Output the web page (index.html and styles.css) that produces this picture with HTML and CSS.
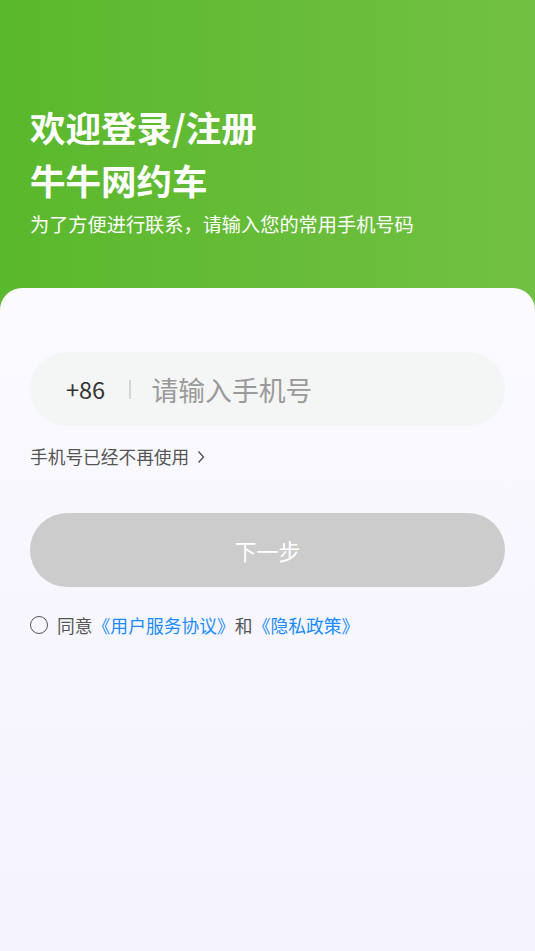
FILE: index.html
```html
<!DOCTYPE html>
<html lang="zh">
<head>
<meta charset="utf-8">
<title>登录</title>
<link rel="stylesheet" href="styles.css">
</head>
<body>
<div class="page">
  <header class="hero">
    <h1 class="title">欢迎登录/注册<br>牛牛网约车</h1>
    <p class="subtitle">为了方便进行联系，请输入您的常用手机号码</p>
  </header>
  <main class="card">
    <div class="phone">
      <span class="code">+86</span>
      <span class="divider"></span>
      <span class="placeholder">请输入手机号</span>
    </div>
    <div class="nouse">手机号已经不再使用
      <svg class="chev" width="8" height="14" viewBox="0 0 8 14"><path d="M1.5 1.5 L6.5 7 L1.5 12.5" fill="none" stroke="#555" stroke-width="1.4"/></svg>
    </div>
    <button class="next">下一步</button>
    <div class="agree">
      <span class="radio"></span>
      <span class="agree-text">同意<a class="link">《用户服务协议》</a>和<a class="link">《隐私政策》</a></span>
    </div>
  </main>
</div>
</body>
</html>
```
FILE: styles.css
```css
* { box-sizing: border-box; }
html, body { margin: 0; padding: 0; }
body {
  font-family: "Noto Sans CJK SC", "Noto Sans", sans-serif;
  background: #f5f3fe;
}
.page {
  width: 535px;
  height: 951px;
  display: flex;
  flex-direction: column;
  background: linear-gradient(90deg, #5ab82c 0%, #72c043 100%);
  overflow: hidden;
}
.hero {
  height: 288px;
  padding: 100px 30px 0;
  color: #fff;
}
.title {
  margin: 0;
  font-size: 35.5px;
  line-height: 53px;
  font-weight: 700;
}
.subtitle {
  margin: 5px 0 0;
  font-size: 19.2px;
  line-height: 26px;
}
.card {
  flex: 1;
  border-radius: 22px 22px 0 0;
  background: linear-gradient(180deg, #fafaff 0%, #f5f3fe 100%);
  padding: 64px 30px 0;
}
.phone {
  height: 74px;
  border-radius: 37px;
  background: #f4f5f5;
  display: flex;
  align-items: center;
  padding-left: 36px;
}
.code {
  font-size: 23.5px;
  color: #333;
  width: 63px;
}
.divider {
  width: 1.5px;
  height: 19px;
  background: #d4d4d4;
  margin-right: 21px;
}
.placeholder {
  font-size: 26.8px;
  color: #9a9a9a;
}
.nouse {
  margin-top: 17px;
  font-size: 17.7px;
  line-height: 26px;
  color: #555;
  display: flex;
  align-items: center;
  gap: 8px;
}
.chev { margin-top: 1px; }
.next {
  display: block;
  width: 100%;
  margin-top: 44px;
  height: 74px;
  border: none;
  border-radius: 37px;
  background: #cccccc;
  color: #fff;
  font-family: inherit;
  font-size: 22px;
  padding: 0;
}
.agree {
  margin-top: 25px;
  display: flex;
  align-items: center;
  gap: 9px;
  font-size: 17.8px;
  line-height: 26px;
  color: #555;
}
.radio {
  width: 18px;
  height: 18px;
  border: 1.6px solid #555;
  border-radius: 50%;
}
.link { color: #1a8cff; }
```
